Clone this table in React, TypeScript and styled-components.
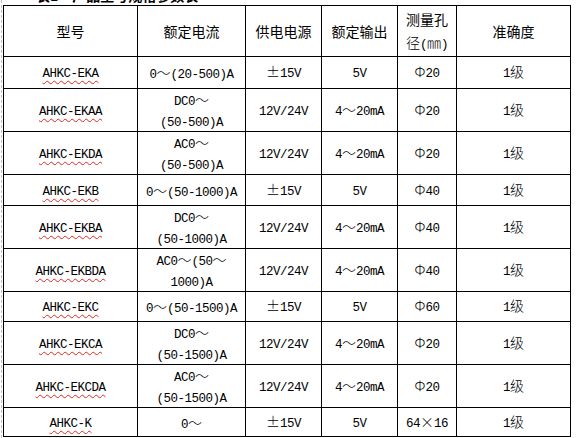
import React from "react";
import styled, { createGlobalStyle } from "styled-components";

const GlobalStyle = createGlobalStyle`
  html, body {
    margin: 0;
    padding: 0;
    background: #ffffff;
  }
`;

type Row = {
  model: string;
  current: string[];
  power: string;
  output: string;
  hole: string;
  grade: string;
  h: number;
};

const rows: Row[] = [
  { model: "AHKC-EKA", current: ["0～(20-500)A"], power: "±15V", output: "5V", hole: "Φ20", grade: "1级", h: 32 },
  { model: "AHKC-EKAA", current: ["DC0～", "(50-500)A"], power: "12V/24V", output: "4～20mA", hole: "Φ20", grade: "1级", h: 42 },
  { model: "AHKC-EKDA", current: ["AC0～", "(50-500)A"], power: "12V/24V", output: "4～20mA", hole: "Φ20", grade: "1级", h: 42 },
  { model: "AHKC-EKB", current: ["0～(50-1000)A"], power: "±15V", output: "5V", hole: "Φ40", grade: "1级", h: 31 },
  { model: "AHKC-EKBA", current: ["DC0～", "(50-1000)A"], power: "12V/24V", output: "4～20mA", hole: "Φ40", grade: "1级", h: 43 },
  { model: "AHKC-EKBDA", current: ["AC0～(50～", "1000)A"], power: "12V/24V", output: "4～20mA", hole: "Φ40", grade: "1级", h: 42 },
  { model: "AHKC-EKC", current: ["0～(50-1500)A"], power: "±15V", output: "5V", hole: "Φ60", grade: "1级", h: 30 },
  { model: "AHKC-EKCA", current: ["DC0～", "(50-1500)A"], power: "12V/24V", output: "4～20mA", hole: "Φ20", grade: "1级", h: 43 },
  { model: "AHKC-EKCDA", current: ["AC0～", "(50-1500)A"], power: "12V/24V", output: "4～20mA", hole: "Φ20", grade: "1级", h: 43 },
  { model: "AHKC-K", current: ["0～"], power: "±15V", output: "5V", hole: "64×16", grade: "1级", h: 29 },
];

const colWidths = [134, 108, 76, 76, 59, 114];

// full-width glyphs (CJK, ～, Φ, ±, ×) get the wide font, ascii stays half-width
const isWide = (ch: string) => ch.charCodeAt(0) > 0xff || ch === "±" || ch === "×";

const Mixed = ({ text }: { text: string }) => {
  const runs: { wide: boolean; s: string }[] = [];
  for (const ch of text) {
    const wide = isWide(ch);
    const last = runs[runs.length - 1];
    if (last && last.wide === wide) last.s += ch;
    else runs.push({ wide, s: ch });
  }
  return (
    <>
      {runs.map((r, i) =>
        r.wide ? <Wide key={i}>{r.s}</Wide> : <Narrow key={i}>{r.s}</Narrow>
      )}
    </>
  );
};

const App = () => {
  return (
    <Page>
      <GlobalStyle />
      <Caption>表1　产品型号规格参数表</Caption>
      <Table>
        <colgroup>
          {colWidths.map((w, i) => (
            <col key={i} style={{ width: w }} />
          ))}
        </colgroup>
        <thead>
          <Tr $h={51}>
            <Th>型号</Th>
            <Th>额定电流</Th>
            <Th>供电电源</Th>
            <Th>额定输出</Th>
            <Th>
              <Line $h={23}>测量孔</Line>
              <Line $h={23}>
                <Mixed text="径(㎜)" />
              </Line>
            </Th>
            <Th>准确度</Th>
          </Tr>
        </thead>
        <tbody>
          {rows.map((r) => (
            <Tr key={r.model} $h={r.h}>
              <Td>
                <Model>
                  <Mixed text={r.model} />
                </Model>
              </Td>
              <Td>
                {r.current.map((l, i) => (
                  <Line key={i} $h={21}>
                    <Mixed text={l} />
                  </Line>
                ))}
              </Td>
              <Td>
                <Mixed text={r.power} />
              </Td>
              <Td>
                <Mixed text={r.output} />
              </Td>
              <Td>
                <Mixed text={r.hole} />
              </Td>
              <Td>
                <Mixed text={r.grade} />
              </Td>
            </Tr>
          ))}
        </tbody>
      </Table>
    </Page>
  );
};

const Page = styled.div`
  width: 576px;
  height: 438px;
  margin-left: 1px;
  padding-left: 1px;
  border-left: 1px dashed #c4c4c4;
  box-sizing: border-box;
  overflow: hidden;
  background: #ffffff;
`;

const Caption = styled.div`
  height: 20px;
  margin-top: -15px;
  padding-left: 33px;
  font-family: "Noto Sans CJK SC", sans-serif;
  font-weight: 700;
  font-size: 14px;
  line-height: 20px;
  color: #000;
  white-space: nowrap;
`;

const Table = styled.table`
  border-collapse: collapse;
  table-layout: fixed;
  width: 567px;
  color: #000;
`;

const Tr = styled.tr<{ $h: number }>`
  height: ${(p) => p.$h}px;
`;

const Th = styled.th`
  border: 1px solid #000;
  padding: 0 4px;
  font-weight: 400;
  font-family: "Noto Sans CJK SC", sans-serif;
  font-size: 14px;
  line-height: 16px;
  text-align: center;
  vertical-align: middle;
  white-space: nowrap;
`;

const Td = styled.td`
  border: 1px solid #000;
  padding: 0 4px;
  font-family: "Noto Sans CJK SC", sans-serif;
  font-size: 14px;
  line-height: 16px;
  text-align: center;
  vertical-align: middle;
  white-space: nowrap;
`;

const Line = styled.div<{ $h: number }>`
  height: ${(p) => p.$h}px;
  line-height: ${(p) => p.$h}px;
`;

const Model = styled.span`
  text-decoration: underline wavy #e0281e;
  text-decoration-thickness: 1px;
  text-underline-offset: 3px;
`;

const Wide = styled.span`
  font-family: "Noto Sans CJK SC", sans-serif;
  font-size: 14px;
  font-weight: 300;
`;

const Narrow = styled.span`
  font-family: "Liberation Mono", monospace;
  font-size: 12.5px;
  letter-spacing: -0.5px;
`;

export default App;
